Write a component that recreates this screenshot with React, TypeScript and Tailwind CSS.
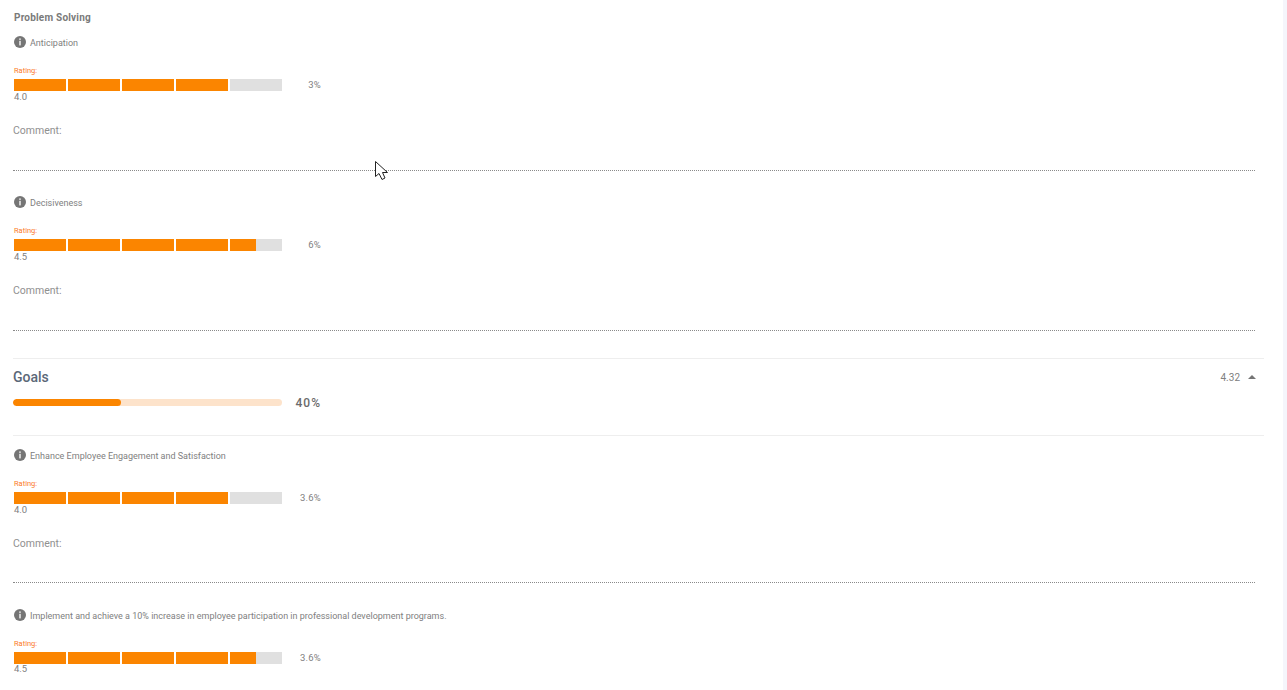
import React from 'react';

const InfoIcon = () => (
  <svg width="12" height="12" viewBox="0 0 12 12" className="shrink-0">
    <circle cx="6" cy="6" r="6" fill="#757575" />
    <rect x="5.2" y="2.4" width="1.6" height="1.5" fill="#e8e8e8" />
    <rect x="5.2" y="4.8" width="1.6" height="4.6" fill="#e8e8e8" />
  </svg>
);

const RatingBar = ({ rating }: { rating: number }) => (
  <div className="flex gap-[2px]">
    {[0, 1, 2, 3, 4].map((i) => {
      const fill = Math.min(Math.max(rating - i, 0), 1) * 100;
      return (
        <div key={i} className="h-3 w-[52px] bg-[#e0e0e0]">
          <div className="h-full bg-[#fb8500]" style={{ width: `${fill}%` }} />
        </div>
      );
    })}
  </div>
);

const RatingItem = ({
  title,
  rating,
  percent,
  lineClass = 'mt-[32px]',
  valueClass = '',
  showComment = true,
}: {
  title: string;
  rating: number;
  percent: string;
  lineClass?: string;
  valueClass?: string;
  showComment?: boolean;
}) => (
  <div className="h-[160px] w-[1242px]">
    <div className="flex h-[18px] items-center gap-[4px] pl-[1px]">
      <InfoIcon />
      <span className="pt-[1px] text-[9px] leading-3 text-[#808080]">{title}</span>
    </div>
    <div className="mt-[15px] h-[10px] pl-[1px] text-[7.5px] leading-[10px] text-[#fb7a2a]">Rating:</div>
    <div className="mt-[3px] flex h-3 items-center pl-[1px]">
      <RatingBar rating={rating} />
      <span className="w-[39px] text-right text-[9.5px] leading-3 tracking-[0.2px] text-[#808080]">{percent}</span>
    </div>
    <div className={`h-3 pl-[1px] text-[9.5px] leading-3 text-[#808080] ${valueClass}`}>{rating.toFixed(1)}</div>
    {showComment && (
      <>
        <div className="mt-[20px] h-4 text-[10.5px] leading-4 text-[#909090]">Comment:</div>
        <div className={`border-t border-dotted border-[#8a8a8a] ${lineClass}`} />
      </>
    )}
  </div>
);

export default function App() {
  return (
    <div className="relative flex h-[690px] overflow-hidden bg-white font-['Roboto',sans-serif]">
      <div className="flex-1 pl-[13px]">
        <div className="flex h-[33px] items-center pl-[1px] pt-[2px] text-[10px] font-bold tracking-[0.2px] text-[#7a7a7a]">
          Problem Solving
        </div>
        <RatingItem title="Anticipation" rating={4} percent="3%" lineClass="mt-[31px]" />
        <RatingItem title="Decisiveness" rating={4.5} percent="6%" lineClass="mt-[31px]" />

        <div className="h-[83px] w-[1251px] border-b border-[#eeeeee] pt-[5px]">
          <div className="border-t border-[#eeeeee]" />
          <div className="mt-[9px] flex h-[18px] items-center justify-between pr-[8px]">
            <span className="text-[14px] font-medium text-[#5b6878]">Goals</span>
            <div className="flex items-center gap-[8px]">
              <span className="text-[10px] text-[#808080]">4.32</span>
              <span className="h-0 w-0 border-x-[4px] border-b-[4px] border-x-transparent border-b-[#757575]" />
            </div>
          </div>
          <div className="mt-[13px] flex h-[7px] items-center">
            <div className="h-[7px] w-[269px] overflow-hidden rounded-full bg-[#fde3cb]">
              <div className="h-full w-[40%] rounded-full bg-[#fb8500]" />
            </div>
            <span className="w-[39px] text-right text-[12px] font-medium tracking-[1px] text-[#6b6b6b]">40%</span>
          </div>
        </div>

        <div className="h-[10px]" />
        <RatingItem
          title="Enhance Employee Engagement and Satisfaction"
          rating={4}
          percent="3.6%"
          lineClass="mt-[30px]"
        />
        <RatingItem
          title="Implement and achieve a 10% increase in employee participation in professional development programs."
          rating={4.5}
          percent="3.6%"
          valueClass="-mt-[1px]"
          showComment={false}
        />
      </div>

      {/* scrollbar track */}
      <div className="w-[4px] shrink-0 bg-[#f5f5fb]" />

      <svg
        width="14"
        height="20"
        viewBox="0 0 14 20"
        className="absolute left-[375px] top-[161px]"
      >
        <path
          d="M0.5 0.5 L0.5 15.5 L4 12.5 L7 18.5 L10 17 L7.5 11.5 L12.5 11.5 Z"
          fill="#fff"
          stroke="#222"
          strokeWidth="1"
        />
      </svg>
    </div>
  );
}
